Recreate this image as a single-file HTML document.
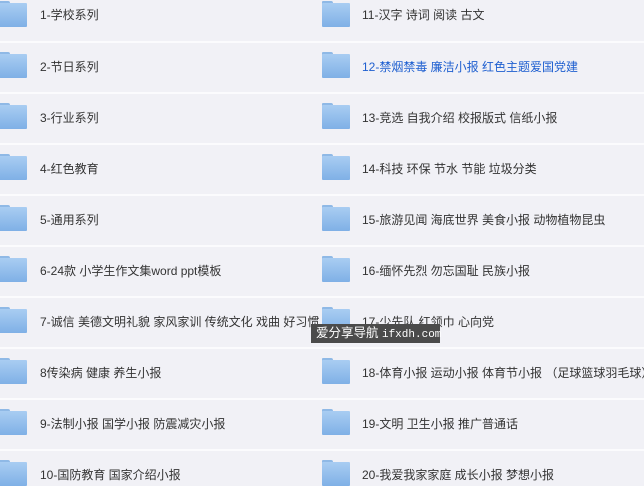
<!DOCTYPE html><html><head><meta charset="utf-8"><style>
body{margin:0;width:644px;height:486px;overflow:hidden;background:#f1f1f6;font-family:"Liberation Sans","Noto Sans CJK SC",sans-serif;font-size:12px;color:#333;position:relative}
.sep{position:absolute;left:0;width:644px;height:2px;background:#fbfbfd}
.f{position:absolute;width:28px;height:26px}
.f:before{content:"";position:absolute;left:0;top:0;width:11px;height:4px;background:#8fb9e6;border-radius:1px 2px 0 0}
.f:after{content:"";position:absolute;left:0;top:2px;width:28px;height:24px;background:linear-gradient(#a9cdf2,#7fb0e6);border-radius:1px}
.t{position:absolute;white-space:nowrap;line-height:16px}
.tip{position:absolute;left:311px;top:324px;width:129px;height:19px;background:#4b4b4b;color:#fff;font-size:12.5px;line-height:19px;padding-left:5px;box-sizing:border-box;white-space:nowrap}
</style></head><body>
<div class="sep" style="top:41px"></div><div class="sep" style="top:92px"></div><div class="sep" style="top:143px"></div><div class="sep" style="top:194px"></div><div class="sep" style="top:245px"></div><div class="sep" style="top:296px"></div><div class="sep" style="top:347px"></div><div class="sep" style="top:398px"></div><div class="sep" style="top:449px"></div>
<div class="f" style="left:-1px;top:1px"></div><div class="t" style="left:40px;top:7px">1-学校系列</div>
<div class="f" style="left:-1px;top:52px"></div><div class="t" style="left:40px;top:59px">2-节日系列</div>
<div class="f" style="left:-1px;top:103px"></div><div class="t" style="left:40px;top:110px">3-行业系列</div>
<div class="f" style="left:-1px;top:154px"></div><div class="t" style="left:40px;top:161px">4-红色教育</div>
<div class="f" style="left:-1px;top:205px"></div><div class="t" style="left:40px;top:212px">5-通用系列</div>
<div class="f" style="left:-1px;top:256px"></div><div class="t" style="left:40px;top:263px">6-24款 小学生作文集word ppt模板</div>
<div class="f" style="left:-1px;top:307px"></div><div class="t" style="left:40px;top:314px">7-诚信 美德文明礼貌 家风家训 传统文化 戏曲 好习惯</div>
<div class="f" style="left:-1px;top:358px"></div><div class="t" style="left:40px;top:365px">8传染病 健康 养生小报</div>
<div class="f" style="left:-1px;top:409px"></div><div class="t" style="left:40px;top:416px">9-法制小报 国学小报 防震减灾小报</div>
<div class="f" style="left:-1px;top:460px"></div><div class="t" style="left:40px;top:467px">10-国防教育 国家介绍小报</div>
<div class="f" style="left:322px;top:1px"></div><div class="t" style="left:362px;top:7px">11-汉字 诗词 阅读 古文</div>
<div class="f" style="left:322px;top:52px"></div><div class="t" style="left:362px;top:59px;color:#1e5fd0">12-禁烟禁毒 廉洁小报 红色主题爱国党建</div>
<div class="f" style="left:322px;top:103px"></div><div class="t" style="left:362px;top:110px">13-竞选 自我介绍 校报版式 信纸小报</div>
<div class="f" style="left:322px;top:154px"></div><div class="t" style="left:362px;top:161px">14-科技 环保 节水 节能 垃圾分类</div>
<div class="f" style="left:322px;top:205px"></div><div class="t" style="left:362px;top:212px">15-旅游见闻 海底世界 美食小报 动物植物昆虫</div>
<div class="f" style="left:322px;top:256px"></div><div class="t" style="left:362px;top:263px">16-缅怀先烈 勿忘国耻 民族小报</div>
<div class="f" style="left:322px;top:307px"></div><div class="t" style="left:362px;top:314px">17-少先队 红领巾 心向党</div>
<div class="f" style="left:322px;top:358px"></div><div class="t" style="left:362px;top:365px">18-体育小报 运动小报 体育节小报 （足球篮球羽毛球）</div>
<div class="f" style="left:322px;top:409px"></div><div class="t" style="left:362px;top:416px">19-文明 卫生小报 推广普通话</div>
<div class="f" style="left:322px;top:460px"></div><div class="t" style="left:362px;top:467px">20-我爱我家家庭 成长小报 梦想小报</div>
<div class="tip">爱分享导航 <span style="font-family:'Liberation Mono',monospace;font-size:11px">ifxdh.com</span></div>
</body></html>
